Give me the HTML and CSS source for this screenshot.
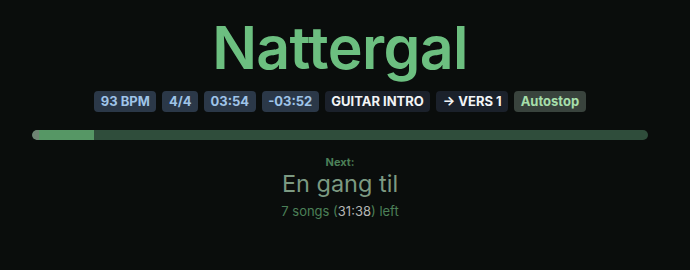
FILE: index.html
```html
<!DOCTYPE html>
<html lang="no">
<head>
<meta charset="utf-8">
<title>Nattergal</title>
<link rel="stylesheet" href="styles.css">
</head>
<body>
<main class="player">
  <h1 class="title">Nattergal</h1>
  <div class="badges">
    <span class="badge info">93 BPM</span>
    <span class="badge info">4/4</span>
    <span class="badge info">03:54</span>
    <span class="badge info">-03:52</span>
    <span class="badge part">GUITAR INTRO</span>
    <span class="badge part">→ VERS 1</span>
    <span class="badge auto">Autostop</span>
  </div>
  <div class="progress">
    <div class="progress-fill" style="width: 10%"></div>
  </div>
  <section class="next">
    <div class="next-label">Next:</div>
    <div class="next-title">En gang til</div>
    <div class="next-meta">7 songs (<span class="remaining">31:38</span>) left</div>
  </section>
</main>
</body>
</html>
```
FILE: styles.css
```css
html, body {
  margin: 0;
  padding: 0;
  background: #0a0d0c;
}
body {
  font-family: Inter, "Noto Sans", sans-serif;
}
.player {
  display: flex;
  flex-direction: column;
  align-items: center;
  padding: 10px 42px 0 32px;
}
.title {
  margin: 0;
  font-size: 59px;
  font-weight: 600;
  color: #6cbf80;
  line-height: 75px;
  letter-spacing: -0.6px;
}
.badges {
  display: flex;
  gap: 6px;
  margin-top: 6px;
}
.badge {
  font-size: 13px;
  font-weight: 700;
  line-height: 21px;
  padding: 0 6.5px;
  border-radius: 4px;
}
.badge.info {
  background: #2b3848;
  color: #9fc4e8;
}
.badge.part {
  background: #1b212b;
  color: #f2f4f6;
}
.badge.auto {
  background: #39433d;
  color: #a6dfaa;
}
.progress {
  align-self: stretch;
  height: 10px;
  margin-top: 18px;
  border-radius: 5px;
  background: #2f4d3b;
  overflow: hidden;
  display: flex;
}
.progress-fill {
  box-sizing: border-box;
  background: #569765;
  border-left: 7px solid #6e8373;
  border-radius: 5px 0 0 5px;
}
.next {
  margin-top: 16px;
  display: flex;
  flex-direction: column;
  align-items: center;
}
.next-label {
  font-size: 11px;
  font-weight: 700;
  color: #4c8058;
  line-height: 13px;
}
.next-title {
  font-size: 23.5px;
  color: #7c9a82;
  line-height: 30px;
}
.next-meta {
  font-size: 13px;
  color: #4c8058;
  line-height: 18px;
  margin-top: 3px;
}
.remaining {
  color: #b4b6b5;
}
```
